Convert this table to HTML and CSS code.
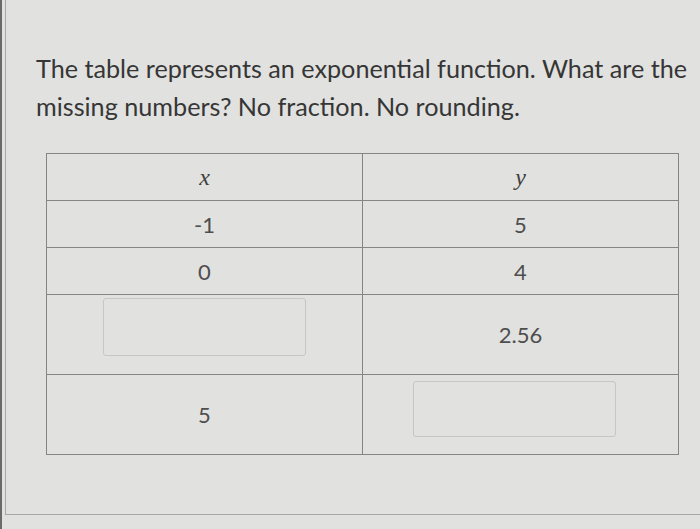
FILE: index.html
```html
<!DOCTYPE html>
<html>
<head>
<meta charset="utf-8">
<link rel="stylesheet" href="styles.css">
</head>
<body>
<div class="screen">
  <div class="panel">
    <p class="question">The table represents an exponential function. What are the missing numbers? No fraction. No rounding.</p>
    <table class="grid">
      <tr class="row-s">
        <td><span class="math">x</span></td>
        <td><span class="math">y</span></td>
      </tr>
      <tr class="row-s">
        <td>-1</td>
        <td>5</td>
      </tr>
      <tr class="row-s">
        <td>0</td>
        <td>4</td>
      </tr>
      <tr class="row-l">
        <td class="top"><div class="input"></div></td>
        <td>2.56</td>
      </tr>
      <tr class="row-l">
        <td>5</td>
        <td class="top"><div class="input input-low"></div></td>
      </tr>
    </table>
  </div>
</div>
</body>
</html>
```

FILE: styles.css
```css
html, body {
  margin: 0;
  padding: 0;
}
body {
  width: 700px;
  height: 529px;
  background: #dcdcda;
  overflow: hidden;
}
.screen {
  height: 529px;
  border-left: 2px solid #6a6a6a;
  background: #e1e1df;
  padding-left: 3px;
  box-sizing: border-box;
}
.panel {
  height: 515px;
  border-left: 1px solid #a8a8a6;
  border-bottom: 1px solid #a8a8a6;
  box-sizing: border-box;
  padding-top: 49px;
}
.question {
  margin: 0 0 0 30px;
  width: 660px;
  font-family: Lato, "Open Sans", sans-serif;
  font-size: 25.2px;
  line-height: 38px;
  color: #363636;
}
.grid {
  margin: 28px 0 0 40px;
  width: 633px;
  border-collapse: collapse;
  table-layout: fixed;
  font-family: Lato, "Open Sans", sans-serif;
  font-size: 22px;
  color: #4e4e4e;
}
.grid td {
  border: 1px solid #858585;
  text-align: center;
  padding: 0;
}
.grid tr td:first-child {
  width: 315px;
}
.row-s td {
  height: 46px;
}
.row-l td {
  height: 79px;
}
.grid td.top {
  vertical-align: top;
}
.math {
  font-family: "Liberation Serif", "DejaVu Serif", serif;
  font-style: italic;
  font-size: 24px;
  color: #3e3e3e;
}
.input {
  width: 203px;
  height: 58px;
  margin: 3px auto 0;
  border: 1px solid #c6c6c4;
  border-radius: 3px;
  box-sizing: border-box;
}
.input-low {
  margin-top: 6px;
  height: 56px;
  position: relative;
  left: -6px;
}
```
